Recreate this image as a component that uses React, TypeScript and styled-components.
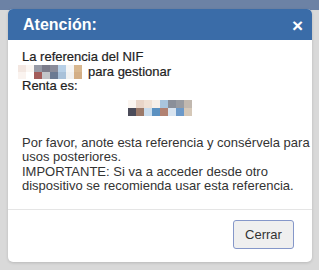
import React from 'react';
import styled, { createGlobalStyle } from 'styled-components';

const GlobalStyle = createGlobalStyle`
  html, body {
    margin: 0;
    padding: 0;
    background: #d9d9d9;
  }
  body {
    font-family: Arial, "Liberation Sans", sans-serif;
  }
`;

const Page = styled.div`
  width: 319px;
  height: 270px;
  overflow: hidden;
  background: #d9d9d9;
`;

const TopStrip = styled.div`
  height: 10px;
  background: #6c82a5;
`;

const Modal = styled.div`
  margin: -1px 7px 0 8px;
  background: #fff;
  border-radius: 5px;
  box-shadow: 0 1px 3px rgba(0, 0, 0, 0.15);
  overflow: hidden;
`;

const Header = styled.div`
  height: 31px;
  display: flex;
  align-items: center;
  justify-content: space-between;
  padding: 0 9px 0 15px;
  background: #3a6ca8;
  color: #fff;
`;

const Title = styled.h4`
  margin: 0;
  font-size: 16px;
  font-weight: bold;
`;

const CloseBtn = styled.span`
  font-size: 19px;
  font-weight: bold;
  line-height: 1;
  margin-top: 2px;
`;

const Body = styled.div`
  padding: 10px 8px 15px 14px;
  font-size: 13px;
  line-height: 14.5px;
  color: #333;
`;

const Strong = styled.div`
  color: #222;
  -webkit-text-stroke: 0.2px #222;
`;

const Paragraph = styled.div`
  white-space: nowrap;
`;

const Pixels = styled.span<{ $cols: number; $h: number }>`
  display: inline-grid;
  grid-template-columns: repeat(${(p) => p.$cols}, 8px);
  grid-auto-rows: ${(p) => p.$h}px;
  vertical-align: middle;
  filter: blur(0.4px);
`;

const Cell = styled.span<{ $c: string }>`
  background: ${(p) => p.$c};
`;

const NifLine = styled.div`
  display: flex;
  align-items: center;
  gap: 6px;
  margin-left: -4px;
`;

const CodeRow = styled.div`
  display: flex;
  justify-content: center;
  padding: 6px 6px 0 0;
  height: 42px;
  box-sizing: border-box;
`;

const Footer = styled.div`
  border-top: 1px solid #e5e5e5;
  display: flex;
  justify-content: flex-end;
  padding: 10px 18px 13px;
`;

const Button = styled.button`
  width: 61px;
  height: 29px;
  font-family: Arial, "Liberation Sans", sans-serif;
  font-size: 13px;
  color: #333;
  background: #efefef;
  border: 1px solid #8597c9;
  border-radius: 3px;
`;

const nifCells = [
  '#f3e7e1', '#fbf6f2', '#979aa6', '#7c7c8a', '#8b8c9a', '#b7cfe6', '#f5f5f5', '#d8b78f',
  '#faf3ef', '#ffffff', '#a35c5a', '#c2c5c9', '#6b7a93', '#a9c1d9', '#f1f1f1', '#d3ae86',
];

const codeCells = [
  '#fbf5f0', '#e9d5c8', '#f0e1d5', '#f7efe9', '#a9c5dd', '#8a8f99', '#989ba1', '#c1b8af',
  '#4b4b59', '#9b7969', '#c9dced', '#5b91c1', '#b18171', '#d8e4f0', '#6b99c9', '#d5c8b8',
];

const App = () => (
  <Page>
    <GlobalStyle />
    <TopStrip />
    <Modal>
      <Header>
        <Title>Atención:</Title>
        <CloseBtn>×</CloseBtn>
      </Header>
      <Body>
        <Strong>La referencia del NIF</Strong>
        <NifLine>
          <Pixels $cols={8} $h={7}>
            {nifCells.map((c, i) => (
              <Cell key={i} $c={c} />
            ))}
          </Pixels>
          <Strong>para gestionar</Strong>
        </NifLine>
        <Strong>Renta es:</Strong>
        <CodeRow>
          <Pixels $cols={8} $h={8}>
            {codeCells.map((c, i) => (
              <Cell key={i} $c={c} />
            ))}
          </Pixels>
        </CodeRow>
        <Paragraph>
          Por favor, anote esta referencia y consérvela para
          <br />
          usos posteriores.
        </Paragraph>
        <Paragraph>
          IMPORTANTE: Si va a acceder desde otro
          <br />
          dispositivo se recomienda usar esta referencia.
        </Paragraph>
      </Body>
      <Footer>
        <Button>Cerrar</Button>
      </Footer>
    </Modal>
  </Page>
);

export default App;
